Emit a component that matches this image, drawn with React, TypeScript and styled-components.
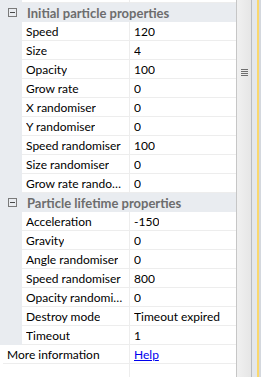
import React from "react";
import styled, { createGlobalStyle } from "styled-components";

const Global = createGlobalStyle`
  html, body { margin: 0; padding: 0; background: #fff; overflow: hidden; }
  body { font-family: "Segoe UI", Lato, "Liberation Sans", sans-serif; font-size: 12px; }
`;

const Frame = styled.div`
  display: flex;
  width: 261px;
  height: 377px;
  overflow: hidden;
`;

const Grid = styled.div`
  width: 236px;
  height: 377px;
  overflow: hidden;
  flex: none;
`;

const Scrolled = styled.div`
  margin-top: -16px;
`;

const Category = styled.div`
  display: flex;
  align-items: center;
  height: 19px;
  background: #e9ecf0;
  color: #6d6d6d;
  font-weight: bold;
  font-size: 13px;
`;

const Toggle = styled.span`
  width: 22px;
  flex: none;
  display: flex;
  justify-content: center;
  align-items: center;
  padding-left: 2px;
  box-sizing: border-box;
`;

const ToggleBox = styled.span`
  width: 7px;
  height: 7px;
  border: 1px solid #7a7a7a;
  position: relative;
  &::after {
    content: "";
    position: absolute;
    left: 1px;
    right: 1px;
    top: 3px;
    height: 1px;
    background: #4a4a4a;
  }
`;

const CatLabel = styled.span`
  padding-left: 5px;
  white-space: nowrap;
`;

const Row = styled.div<{ $indent?: boolean }>`
  display: flex;
  height: 19px;
  background: ${(p) => (p.$indent ? "#e9ecf0" : "#fff")};
`;

const Margin = styled.div<{ $indent?: boolean }>`
  width: ${(p) => (p.$indent ? "22px" : "3px")};
  flex: none;
`;

const Cell = styled.div<{ $w?: number }>`
  ${(p) => (p.$w ? `width: ${p.$w}px; flex: none;` : "flex: 1;")}
  background: #fff;
  border-bottom: 1px solid #ededed;
  box-sizing: border-box;
  padding-left: 4px;
  padding-right: 2px;
  display: flex;
  align-items: center;
  white-space: nowrap;
  overflow: hidden;
  color: #000;
  & + & {
    border-left: 1px solid #ededed;
  }
`;

const CellText = styled.span`
  overflow: hidden;
  text-overflow: ellipsis;
  min-width: 0;
`;

const Link = styled.a`
  color: #0000ee;
  text-decoration: underline;
`;

const ScrollBar = styled.div`
  width: 14px;
  flex: none;
  border-left: 1px solid #c6c6c6;
  border-right: 1px solid #b9bcc0;
  background: linear-gradient(to right, #f0f0f0, #e6e6e6);
  display: flex;
  justify-content: center;
  padding-top: 69px;
`;

const Grip = styled.div`
  width: 7px;
  height: 7px;
  background: repeating-linear-gradient(
    to bottom,
    #6e6e6e 0px,
    #6e6e6e 1px,
    transparent 1px,
    transparent 2px
  );
`;

const Edge = styled.div`
  width: 5px;
  flex: none;
  background: #e4e7eb;
`;

const Accent = styled.div`
  width: 2px;
  flex: none;
  background: #fad86e;
`;

const Outer = styled.div`
  width: 2px;
  flex: none;
  background: #d4d8de;
`;

type Prop = [string, string];

const initial: Prop[] = [
  ["Speed", "120"],
  ["Size", "4"],
  ["Opacity", "100"],
  ["Grow rate", "0"],
  ["X randomiser", "0"],
  ["Y randomiser", "0"],
  ["Speed randomiser", "100"],
  ["Size randomiser", "0"],
  ["Grow rate randomiser", "0"],
];

const lifetime: Prop[] = [
  ["Acceleration", "-150"],
  ["Gravity", "0"],
  ["Angle randomiser", "0"],
  ["Speed randomiser", "800"],
  ["Opacity randomiser", "0"],
  ["Destroy mode", "Timeout expired"],
  ["Timeout", "1"],
];

const PropRow = ({ name, value }: { name: string; value: string }) => (
  <Row $indent>
    <Margin $indent />
    <Cell $w={107}>
      <CellText>{name}</CellText>
    </Cell>
    <Cell>
      <CellText>{value}</CellText>
    </Cell>
  </Row>
);

const Section = ({ title, items }: { title: string; items: Prop[] }) => (
  <>
    <Category>
      <Toggle>
        <ToggleBox />
      </Toggle>
      <CatLabel>{title}</CatLabel>
    </Category>
    {items.map(([n, v]) => (
      <PropRow key={title + n} name={n} value={v} />
    ))}
  </>
);

export default function App() {
  return (
    <>
      <Global />
      <Frame>
        <Grid>
          <Scrolled>
            <PropRow name="Angle" value="" />
            <Section title="Initial particle properties" items={initial} />
            <Section title="Particle lifetime properties" items={lifetime} />
            <Row>
              <Margin />
              <Cell $w={126}>
                <CellText>More information</CellText>
              </Cell>
              <Cell>
                <Link href="#">Help</Link>
              </Cell>
            </Row>
            <Row>
              <Margin />
              <Cell $w={126} />
              <Cell />
            </Row>
          </Scrolled>
        </Grid>
        <ScrollBar>
          <Grip />
        </ScrollBar>
        <Edge />
        <Accent />
        <Outer />
      </Frame>
    </>
  );
}
